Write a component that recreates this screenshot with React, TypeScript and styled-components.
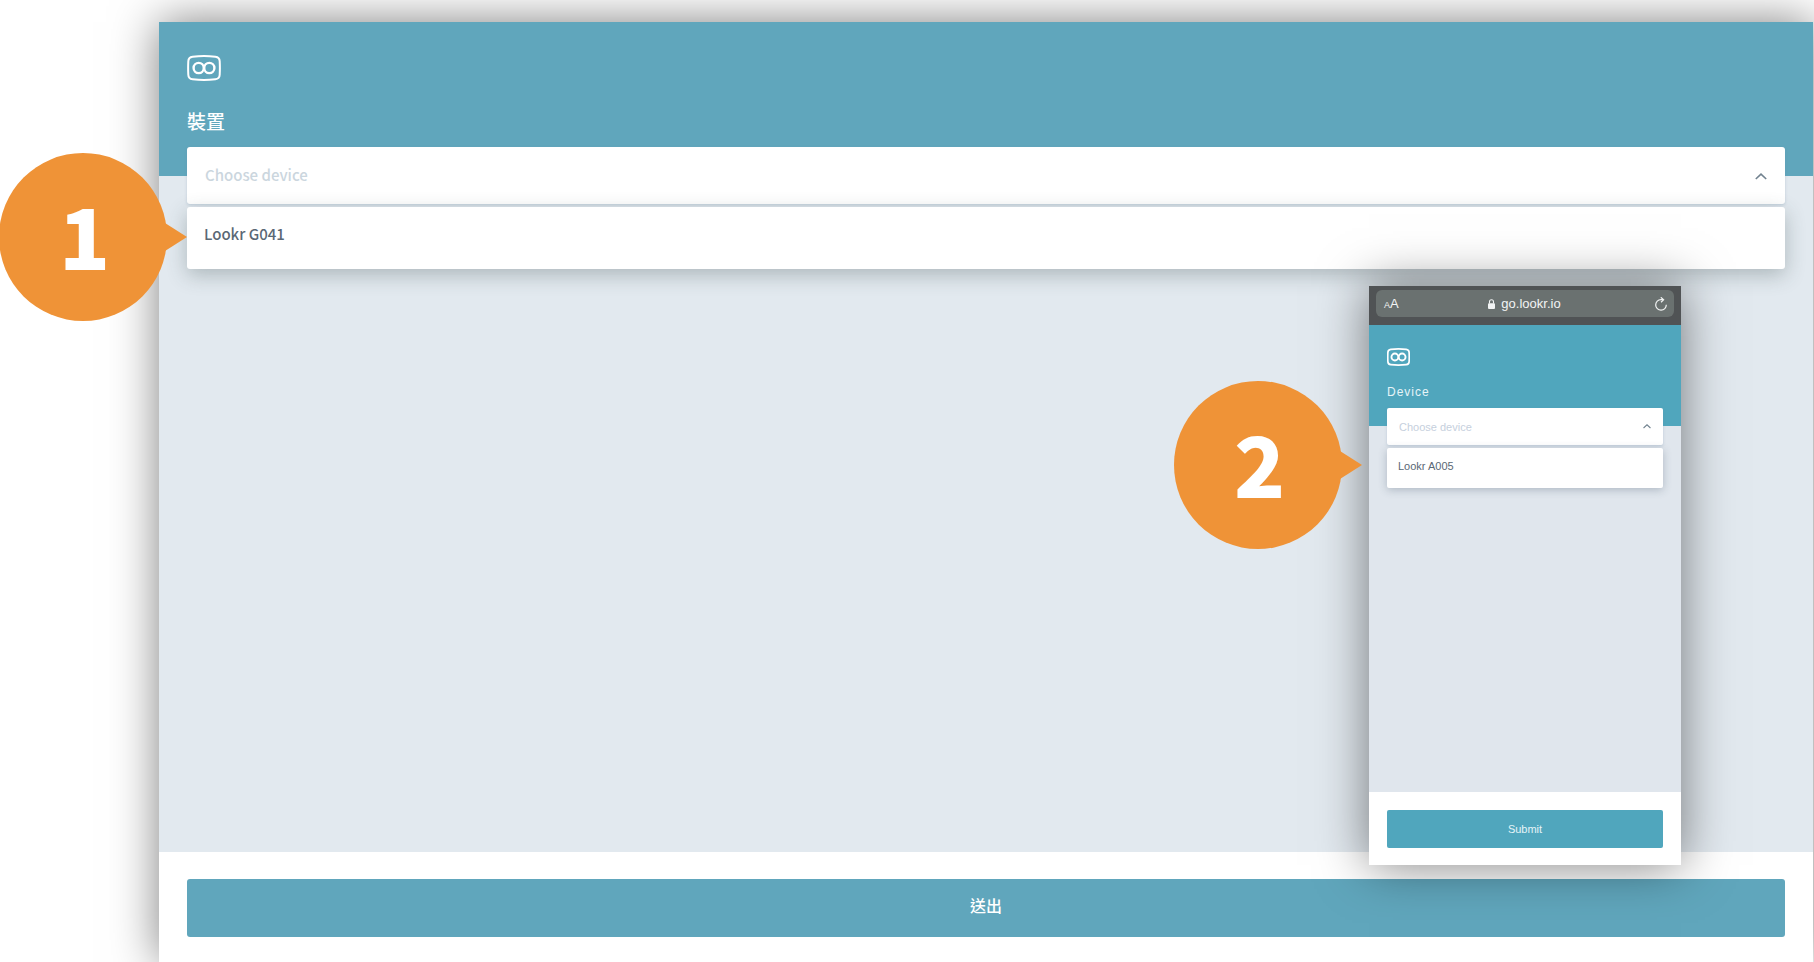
import { useState } from "react";
import styled, { createGlobalStyle, css } from "styled-components";

type Size = "large" | "small";

const sans = `"Noto Sans CJK TC", "Noto Sans", sans-serif`;
const phoneSans = `"Liberation Sans", Arial, sans-serif`;

const GlobalStyle = createGlobalStyle`
  *, *::before, *::after { box-sizing: border-box; }
  body { margin: 0; background: #fff; font-family: ${sans}; overflow-x: hidden; }
  button, select { font: inherit; letter-spacing: inherit; }
`;

const Page = styled.main`
  min-height: 100vh;
  padding: 22px 1px 0 159px;
  overflow: hidden;
`;

const Desktop = styled.section`
  position: relative;
  display: flex;
  flex-direction: column;
  min-height: calc(100vh - 22px);
  background: #e2e9ef;
  box-shadow: 0 0 44px rgba(0, 0, 0, 0.5);
`;

const Phone = styled.section`
  position: absolute;
  top: 264px;
  right: 132px;
  display: flex;
  flex-direction: column;
  width: 312px;
  min-height: 579px;
  background: #e0e6ed;
  font-family: ${phoneSans};
  box-shadow: 0 0 48px rgba(0, 0, 0, 0.5);
`;

const Header = styled.header<{ $size: Size }>`
  display: flex;
  flex-direction: column;
  align-items: flex-start;
  color: #fff;
  ${({ $size }) =>
    $size === "large"
      ? css`
          gap: 27px;
          padding: 33px 28px 42px;
          background: #60a6bc;
        `
      : css`
          gap: 18px;
          padding: 23px 18px 26px;
          background: #50a6bd;
        `}
`;

const LogoSvg = styled.svg<{ $size: Size }>`
  display: block;
  width: ${({ $size }) => ($size === "large" ? 34 : 23)}px;
  height: ${({ $size }) => ($size === "large" ? 26 : 18)}px;
`;

const Label = styled.label<{ $size: Size }>`
  ${({ $size }) =>
    $size === "large"
      ? css`
          font-size: 19px;
          font-weight: 500;
          line-height: 26px;
        `
      : css`
          font-size: 12px;
          line-height: 16px;
          letter-spacing: 1px;
          color: #e6f4f8;
        `}
`;

const Content = styled.div<{ $size: Size }>`
  flex: 1;
  display: flex;
  flex-direction: column;
  gap: 3px;
  ${({ $size }) =>
    $size === "large"
      ? css`
          margin-top: -29px;
          padding: 0 28px;
        `
      : css`
          margin-top: -18px;
          padding: 0 18px;
        `}
`;

const Control = styled.div<{ $size: Size }>`
  display: grid;
  align-items: center;
  background: #fff;
  box-shadow: 0 1px 3px rgba(110, 140, 165, 0.3);
  border-radius: ${({ $size }) => ($size === "large" ? 3 : 2)}px;

  > * { grid-area: 1 / 1; }
`;

const Select = styled.select<{ $size: Size }>`
  appearance: none;
  width: 100%;
  border: 0;
  outline: none;
  background: transparent;
  ${({ $size }) =>
    $size === "large"
      ? css`
          height: 57px;
          padding: 0 40px 2px 18px;
          font-size: 15px;
          font-weight: 500;
          color: #cbd6de;
        `
      : css`
          height: 37px;
          padding: 0 30px 0 12px;
          font-size: 11px;
          color: #c6d0dd;
        `}
`;

const Chevron = styled.svg<{ $size: Size }>`
  justify-self: end;
  pointer-events: none;
  width: ${({ $size }) => ($size === "large" ? 12 : 8)}px;
  margin-right: ${({ $size }) => ($size === "large" ? 18 : 12)}px;
  margin-top: ${({ $size }) => ($size === "large" ? 2 : 0)}px;
`;

const Menu = styled.ul<{ $size: Size }>`
  margin: 0;
  padding: 0;
  list-style: none;
  background: #fff;
  ${({ $size }) =>
    $size === "large"
      ? css`
          border-radius: 3px;
          box-shadow: 0 6px 20px rgba(50, 70, 70, 0.3);
        `
      : css`
          border-radius: 2px;
          box-shadow: 0 2px 8px rgba(60, 80, 100, 0.3);
        `}
`;

const MenuItem = styled.button<{ $size: Size }>`
  display: block;
  width: 100%;
  border: 0;
  background: transparent;
  text-align: left;
  color: #5a6875;
  cursor: pointer;
  ${({ $size }) =>
    $size === "large"
      ? css`
          height: 62px;
          padding: 0 17px 9px;
          font-size: 15px;
          font-weight: 500;
        `
      : css`
          height: 40px;
          padding: 0 11px 4px;
          font-size: 11px;
        `}
`;

const Footer = styled.footer<{ $size: Size }>`
  background: #fff;
  padding: ${({ $size }) => ($size === "large" ? "27px 28px 25px" : "18px 18px 17px")};
`;

const Submit = styled.button<{ $size: Size }>`
  display: block;
  width: 100%;
  border: 0;
  cursor: pointer;
  color: #fff;
  ${({ $size }) =>
    $size === "large"
      ? css`
          height: 58px;
          padding: 0 0 6px;
          border-radius: 3px;
          background: #60a6bc;
          font-size: 16px;
          font-weight: 500;
        `
      : css`
          height: 38px;
          padding: 0;
          border-radius: 2px;
          background: #50a6bd;
          font-size: 11px;
          color: #e6f4f8;
        `}
`;

const BrowserBar = styled.div`
  padding: 4px 7px 8px;
  background: #505355;
`;

const AddressBar = styled.div`
  display: grid;
  grid-template-columns: 1fr auto 1fr;
  align-items: center;
  height: 27px;
  padding: 0 7px 0 8px;
  border-radius: 6px;
  background: #6a7170;
  color: #f2f4f4;
`;

const TextSize = styled.button`
  justify-self: start;
  border: 0;
  padding: 0;
  background: transparent;
  color: inherit;
  font-size: 13px;

  small { font-size: 9px; }
`;

const Address = styled.span`
  display: flex;
  align-items: center;
  gap: 6px;
  padding-right: 2px;
  font-size: 13px;
`;

const Reload = styled.button`
  justify-self: end;
  display: flex;
  border: 0;
  padding: 0;
  background: transparent;
  color: inherit;
`;

const Callout = styled.div<{ $top: number; $left: number }>`
  position: absolute;
  top: ${({ $top }) => $top}px;
  left: ${({ $left }) => $left}px;
  display: flex;
  align-items: center;
  justify-content: center;
  width: 168px;
  height: 168px;
  padding: 0 0 6px 3px;
  border-radius: 50%;
  background: #ef9337;
  color: #fff;
  font-family: ${sans};
  font-size: 84px;
  font-weight: 900;
  line-height: 1;

  &::after {
    content: "";
    position: absolute;
    left: calc(100% - 2px);
    top: 70px;
    border: solid transparent;
    border-width: 14px 0 14px 22px;
    border-left-color: #ef9337;
  }
`;

function Logo({ size }: { size: Size }) {
  const large = size === "large";
  return (
    <LogoSvg $size={size} viewBox="0 0 34 26" fill="none" stroke="#fff" role="img" aria-label="Lookr">
      <path
        d="M5.6 1.7C12 1 22 1 28.4 1.7C31.6 2.1 32.6 3.2 32.7 6.2C32.9 10 32.9 16 32.7 19.8C32.6 22.8 31.6 23.9 28.4 24.3C22 25 12 25 5.6 24.3C2.4 23.9 1.4 22.8 1.3 19.8C1.1 16 1.1 10 1.3 6.2C1.4 3.2 2.4 2.1 5.6 1.7Z"
        strokeWidth={large ? 2 : 2.5}
      />
      <circle cx="11.7" cy="13" r="5.1" strokeWidth={large ? 2.4 : 2.8} />
      <circle cx="22.3" cy="13" r="5.1" strokeWidth={large ? 2.4 : 2.8} />
    </LogoSvg>
  );
}

interface DeviceFormProps {
  size: Size;
  label: string;
  device: string;
  submit: string;
}

function DeviceForm({ size, label, device, submit }: DeviceFormProps) {
  const [value, setValue] = useState("");
  const id = `device-${size}`;
  return (
    <>
      <Header $size={size}>
        <Logo size={size} />
        <Label $size={size} htmlFor={id}>{label}</Label>
      </Header>
      <Content $size={size}>
        <Control $size={size}>
          <Select $size={size} id={id} value={value} onChange={(e) => setValue(e.target.value)}>
            <option value="">Choose device</option>
            <option value={device}>{device}</option>
          </Select>
          <Chevron $size={size} viewBox="0 0 12 7" fill="none" stroke="#71828f" strokeWidth="1.6" aria-hidden="true">
            <path d="M.8 6L6 1.2L11.2 6" />
          </Chevron>
        </Control>
        <Menu $size={size}>
          <li>
            <MenuItem $size={size} type="button" onClick={() => setValue(device)}>{device}</MenuItem>
          </li>
        </Menu>
      </Content>
      <Footer $size={size}>
        <Submit $size={size} type="button">{submit}</Submit>
      </Footer>
    </>
  );
}

export default function App() {
  return (
    <Page>
      <GlobalStyle />
      <Desktop>
        <DeviceForm size="large" label="裝置" device="Lookr G041" submit="送出" />
        <Callout $top={131} $left={-160}>1</Callout>
        <Phone>
          <BrowserBar>
            <AddressBar>
              <TextSize type="button" aria-label="Text size"><small>A</small>A</TextSize>
              <Address>
                <svg width="7" height="10" viewBox="0 0 7 10" aria-hidden="true">
                  <rect y="4.2" width="7" height="5.8" rx="1" fill="currentColor" />
                  <path d="M1.5 4.6V2.8a2 2 0 0 1 4 0v1.8" fill="none" stroke="currentColor" strokeWidth="1.1" />
                </svg>
                go.lookr.io
              </Address>
              <Reload type="button" aria-label="Reload">
                <svg width="12" height="14" viewBox="0 0 12 14" fill="none" stroke="currentColor" strokeWidth="1.2">
                  <path d="M11.3 7.8A5.3 5.3 0 1 1 6 2.6H8" />
                  <path d="M5.8 .3L8.6 2.7L6 5.2" />
                </svg>
              </Reload>
            </AddressBar>
          </BrowserBar>
          <DeviceForm size="small" label="Device" device="Lookr A005" submit="Submit" />
          <Callout $top={95} $left={-195}>2</Callout>
        </Phone>
      </Desktop>
    </Page>
  );
}
